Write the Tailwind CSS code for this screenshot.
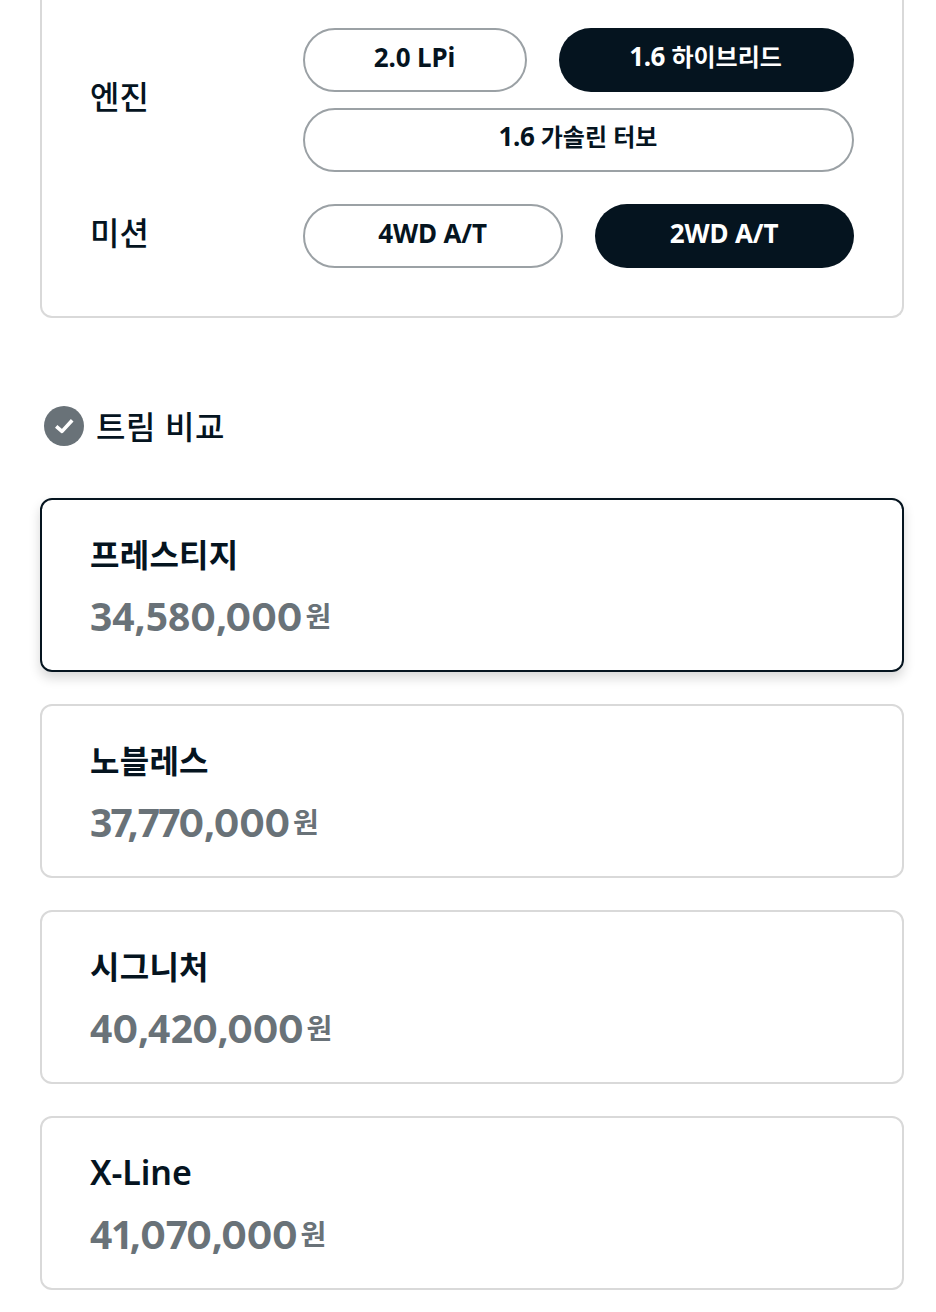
<!DOCTYPE html>
<html lang="ko">
<head>
<meta charset="utf-8">
<title>트림 비교</title>
<script src="https://cdn.jsdelivr.net/npm/@tailwindcss/browser@4"></script>
</head>
<body class="h-[1312px] overflow-hidden bg-white font-['Noto_Sans','Noto_Sans_CJK_KR',sans-serif] text-[#05141f]">
<main class="flex flex-col pl-10 pr-8">
  <section class="flex h-[318px] flex-col gap-8 rounded-b-xl border-2 border-t-0 border-[#d9d9d9] pt-7 pr-12 pl-12">
    <div class="flex">
      <h3 class="w-[213px] pt-[45px] text-[32px] leading-[48px] font-medium"><span>엔진</span></h3>
      <div class="flex w-[551px] flex-col gap-4">
        <div class="flex gap-8">
          <button class="h-16 w-[224px] rounded-full border-2 border-[#9ba1a5] pr-px pb-[7px] text-[26px] leading-9 font-bold tracking-[-0.1px]"><span>2.0 LPi</span></button>
          <button class="h-16 w-[295px] rounded-full bg-[#05141f] pr-0.5 pb-[7px] text-[24px] leading-9 font-bold text-white"><span><span class="text-[26px] tracking-[-0.4px]">1.6 </span>하이브리드</span></button>
        </div>
        <button class="h-16 rounded-full border-2 border-[#9ba1a5] pr-px pb-[7px] text-[24px] leading-9 font-bold"><span><span class="text-[26px] tracking-[-0.4px]">1.6 </span>가솔린 터보</span></button>
      </div>
    </div>
    <div class="flex">
      <h3 class="w-[213px] pt-[5px] text-[32px] leading-[48px] font-medium"><span>미션</span></h3>
      <div class="flex w-[551px] gap-8">
        <button class="h-16 w-[260px] rounded-full border-2 border-[#9ba1a5] pr-px pb-[7px] text-[26px] leading-9 font-bold tracking-[-0.15px]"><span>4WD A/T</span></button>
        <button class="h-16 w-[259px] rounded-full bg-[#05141f] pr-px pb-[7px] text-[26px] leading-9 font-bold tracking-[-0.15px] text-white"><span>2WD A/T</span></button>
      </div>
    </div>
  </section>

  <h2 class="mt-[84px] flex h-12 items-center pl-1 text-[32px] leading-[48px] font-medium">
    <svg class="mr-3 size-10" viewBox="0 0 40 40" fill="none"><circle cx="20" cy="20" r="20" fill="#697278"/><path d="M12.2 20.3L18 25.4L28.2 14.3" stroke="#fff" stroke-width="3.6" stroke-linejoin="round"/></svg>
    <span class="pt-px tracking-[0.6px]">트림 비교</span>
  </h2>

  <div class="mt-12 flex flex-col gap-8">
    <article class="h-[174px] rounded-xl border-2 border-[#05141f] pt-[31px] pl-12 shadow-[0_6px_12px_rgba(0,0,0,0.16)]">
      <h3 class="h-12 text-[32px] leading-[48px] font-bold tracking-[0.25px]"><span>프레스티지</span></h3>
      <p class="mt-[9px] flex h-14 gap-[3px] text-[#697278]"><span class="text-[39px] leading-14 font-bold">34,58<span class="font-['Inter'] text-[38px]">0</span><span class="tracking-[-1.5px]">,</span><span class="font-['Inter'] text-[38px]">000</span></span><span class="text-[28px] leading-[57px] font-bold">원</span></p>
    </article>
    <article class="h-[174px] rounded-xl border-2 border-[#d9d9d9] pt-[31px] pl-12">
      <h3 class="h-12 text-[32px] leading-[48px] font-bold tracking-[0.25px]"><span>노블레스</span></h3>
      <p class="mt-[9px] flex h-14 gap-[3px] text-[#697278]"><span class="text-[39px] leading-14 font-bold"><span class="tracking-[-1.8px]">3</span><span class="tracking-[-5.3px]">7</span><span class="tracking-[-0.8px]">,</span><span class="tracking-[-2px]">77</span><span class="font-['Inter'] text-[38px]">0</span><span class="tracking-[-1.5px]">,</span><span class="font-['Inter'] text-[38px] tracking-[-0.2px]">000</span></span><span class="text-[28px] leading-[57px] font-bold">원</span></p>
    </article>
    <article class="h-[174px] rounded-xl border-2 border-[#d9d9d9] pt-[31px] pl-12">
      <h3 class="h-12 text-[32px] leading-[48px] font-bold tracking-[0.25px]"><span>시그니처</span></h3>
      <p class="mt-[9px] flex h-14 gap-[3px] text-[#697278]"><span class="text-[39px] leading-14 font-bold"><span class="tracking-[0.3px]">4</span><span class="font-['Inter'] text-[38px] tracking-[-0.3px]">0</span><span class="tracking-[-1.1px]">,</span><span class="tracking-[0.5px]">4</span><span class="tracking-[-0.8px]">2</span><span class="font-['Inter'] text-[38px] tracking-[-0.3px]">0</span><span class="tracking-[-1.5px]">,</span><span class="font-['Inter'] text-[38px] tracking-[-0.2px]">000</span></span><span class="text-[28px] leading-[57px] font-bold">원</span></p>
    </article>
    <article class="h-[174px] rounded-xl border-2 border-[#d9d9d9] pt-[31px] pl-12">
      <h3 class="h-12 text-[34px] leading-[46px] font-semibold tracking-[-0.1px]"><span>X-Line</span></h3>
      <p class="mt-[9px] flex h-14 gap-[3px] text-[#697278]"><span class="text-[39px] leading-14 font-bold"><span class="tracking-[-1.2px]">4</span><span class="tracking-[-3.8px]">1</span><span class="tracking-[-0.5px]">,</span><span class="font-['Inter'] text-[38px] tracking-[-0.2px]">0</span><span class="tracking-[-1.8px]">7</span><span class="font-['Inter'] text-[38px] tracking-[-0.2px]">0</span><span class="tracking-[-1.5px]">,</span><span class="font-['Inter'] text-[38px] tracking-[-0.2px]">000</span></span><span class="text-[28px] leading-[57px] font-bold">원</span></p>
    </article>
  </div>
</main>
</body>
</html>
